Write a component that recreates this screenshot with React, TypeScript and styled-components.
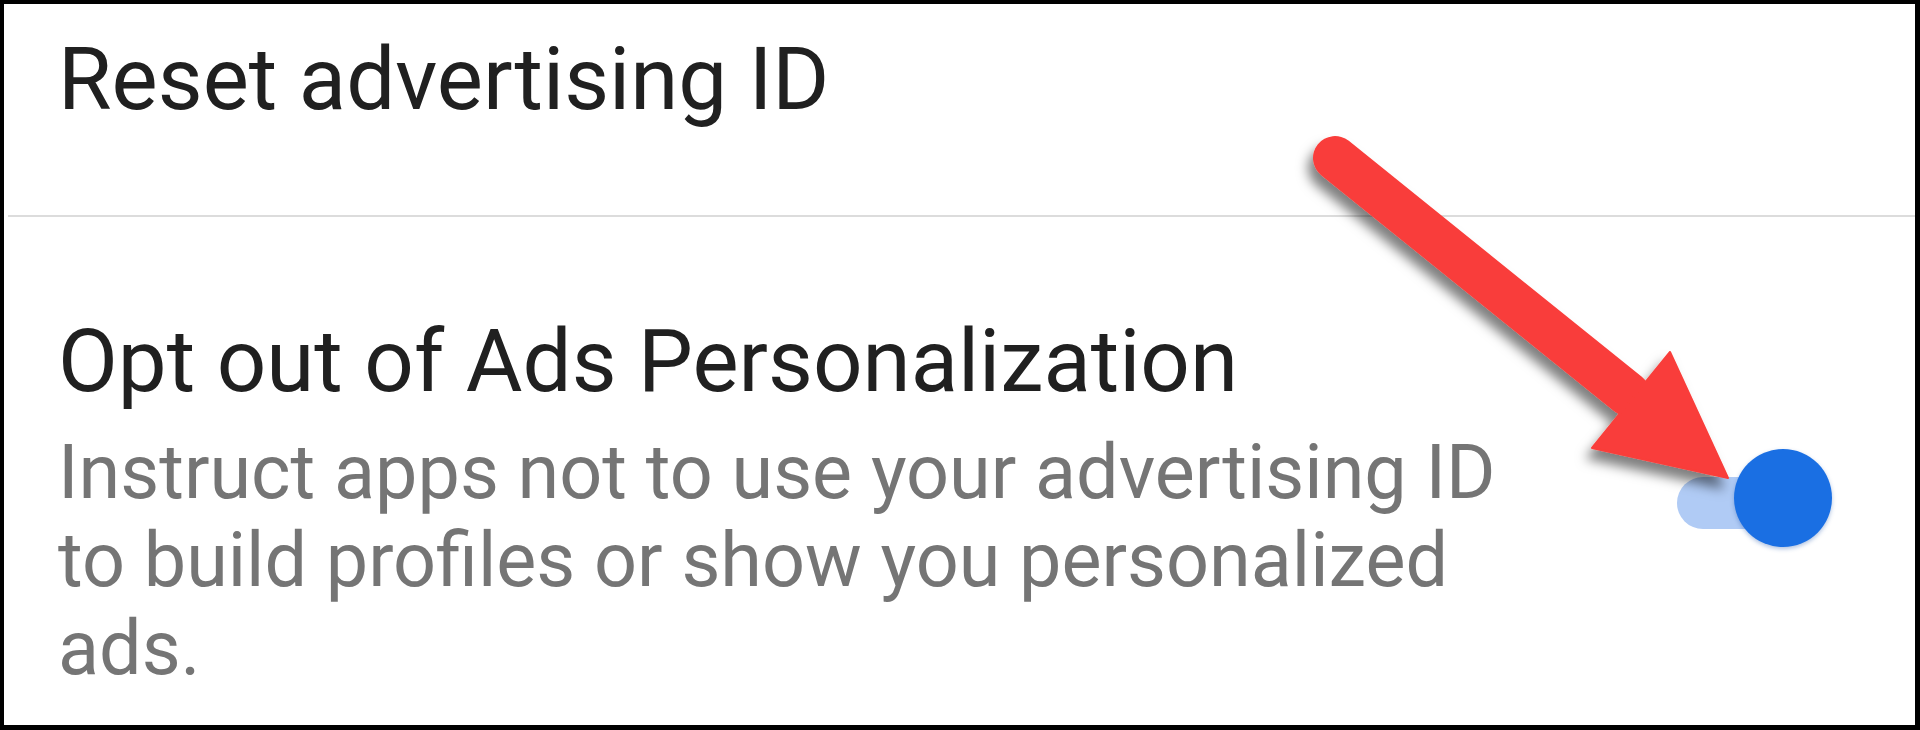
import styled, { createGlobalStyle } from "styled-components";

const GlobalStyle = createGlobalStyle`
  html, body {
    margin: 0;
    padding: 0;
    background: #000;
  }
  body {
    font-family: Roboto, "Liberation Sans", Arial, sans-serif;
  }
`;

const Page = styled.div`
  position: relative;
  width: 1920px;
  height: 730px;
  overflow: hidden;
`;

const Frame = styled.div`
  box-sizing: border-box;
  width: 100%;
  height: 100%;
  background: #fff;
  border-style: solid;
  border-color: #000;
  border-width: 4px 5px 5px 4px;
  display: flex;
  flex-direction: column;
`;

const PlainRow = styled.div`
  height: 211px;
  box-sizing: border-box;
  padding: 25px 0 0 54px;
`;

const Divider = styled.div`
  height: 2px;
  margin-left: 4px;
  background: #dcdcdc;
  flex-shrink: 0;
`;

const SwitchRow = styled.div`
  flex: 1;
  box-sizing: border-box;
  display: flex;
  align-items: center;
  padding: 93px 83px 33px 54px;
`;

const TextBlock = styled.div`
  width: 1480px;
  display: flex;
  flex-direction: column;
  gap: 17px;
`;

const Title = styled.div`
  font-size: 87px;
  line-height: 100px;
  color: #202020;
  white-space: nowrap;
`;

const Summary = styled.div`
  font-size: 75.5px;
  line-height: 88px;
  color: #757575;
`;

const Switch = styled.div<{ $on: boolean }>`
  position: relative;
  margin-left: auto;
  margin-bottom: 7px;
  width: 155px;
  height: 98px;
  flex-shrink: 0;
  opacity: ${(p) => (p.$on ? 1 : 0.6)};
`;

const Track = styled.div`
  position: absolute;
  left: 0;
  top: 28px;
  width: 140px;
  height: 52px;
  border-radius: 26px;
  background: #b0cbf5;
`;

const Thumb = styled.div`
  position: absolute;
  right: 0;
  top: 0;
  width: 98px;
  height: 98px;
  border-radius: 50%;
  background: #1a6fe3;
  box-shadow: 0 2px 4px rgba(26, 80, 170, 0.35);
`;

const ArrowLayer = styled.svg`
  position: absolute;
  left: 1280px;
  top: 100px;
  pointer-events: none;
`;

function Arrow() {
  return (
    <ArrowLayer width={500} height={440} viewBox="1280 100 500 440">
      <defs>
        <filter id="arrowShadow" x="-20%" y="-20%" width="140%" height="140%">
          <feDropShadow dx="-5" dy="10" stdDeviation="6" floodColor="#000" floodOpacity="0.5" />
        </filter>
      </defs>
      <g filter="url(#arrowShadow)" fill="#f93e3a" stroke="#f93e3a">
        <line x1={1335} y1={158} x2={1628} y2={394} strokeWidth={44} strokeLinecap="round" />
        <polygon points="1670,352 1592,448 1728,478" strokeWidth={2} strokeLinejoin="round" />
      </g>
    </ArrowLayer>
  );
}

export default function App() {
  return (
    <>
      <GlobalStyle />
      <Page>
        <Frame>
          <PlainRow>
            <Title>Reset advertising ID</Title>
          </PlainRow>
          <Divider />
          <SwitchRow>
            <TextBlock>
              <Title>Opt out of Ads Personalization</Title>
              <Summary>
                Instruct apps not to use your advertising ID to build profiles or show you personalized ads.
              </Summary>
            </TextBlock>
            <Switch $on>
              <Track />
              <Thumb />
            </Switch>
          </SwitchRow>
        </Frame>
        <Arrow />
      </Page>
    </>
  );
}
